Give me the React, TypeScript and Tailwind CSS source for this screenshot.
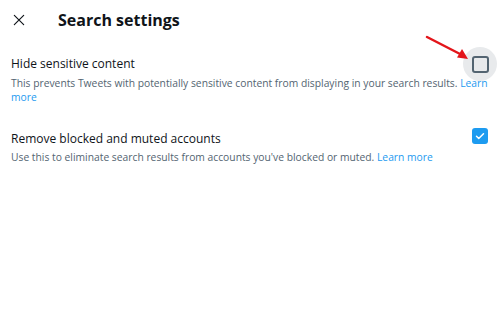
import React, { useState } from 'react';

const font = { fontFamily: '"Open Sans", sans-serif' };

function Checkbox({ checked, onChange, hover }: { checked: boolean; onChange: () => void; hover?: boolean }) {
  return (
    <button
      onClick={onChange}
      className={`flex h-[34px] w-[34px] items-center justify-center rounded-full ${hover ? 'bg-[#e8eaec]' : ''}`}
    >
      {checked ? (
        <span className="flex h-[16px] w-[16px] items-center justify-center rounded-[3px] bg-[#1d9bf0]">
          <svg viewBox="0 0 24 24" className="h-[12px] w-[12px]" fill="none" stroke="white" strokeWidth="3" strokeLinecap="round" strokeLinejoin="round">
            <path d="M5 12.5l4.5 4.5L19 7.5" />
          </svg>
        </span>
      ) : (
        <span className="h-[17px] w-[17px] rounded-[3px] border-2 border-[#536471]" />
      )}
    </button>
  );
}

export default function App() {
  const [hide, setHide] = useState(false);
  const [remove, setRemove] = useState(true);

  return (
    <div className="relative h-[318px] w-[500px] overflow-hidden bg-white text-[#0f1419]" style={font}>
      <div className="flex h-[40px] items-center">
        <button className="ml-[10px] flex h-[18px] w-[18px] items-center justify-center">
          <svg viewBox="0 0 24 24" className="h-[14px] w-[14px]" fill="none" stroke="#0f1419" strokeWidth="2" strokeLinecap="round">
            <path d="M4 4l16 16M20 4L4 20" />
          </svg>
        </button>
        <h1 className="ml-[30px] text-[16px] font-bold">Search settings</h1>
      </div>

      <div className="pl-[11px] pr-[10px] pt-[14px]">
        <div className="flex h-[20px] items-center justify-between">
          <div className="text-[12px]">Hide sensitive content</div>
          <div className="-mr-[7px]">
            <Checkbox checked={hide} onChange={() => setHide(!hide)} hover />
          </div>
        </div>
        <p className="mt-[2px] text-[10.3px] leading-[14px] text-[#536471]">
          This prevents Tweets with potentially sensitive content from displaying in your search results.{' '}
          <a className="text-[#1d9bf0]">Learn more</a>
        </p>
      </div>

      <div className="pl-[11px] pr-[10px] pt-[25px]">
        <div className="flex h-[20px] items-center justify-between">
          <div className="text-[12px]">Remove blocked and muted accounts</div>
          <div className="relative -top-[3px] -mr-[7px]">
            <Checkbox checked={remove} onChange={() => setRemove(!remove)} />
          </div>
        </div>
        <p className="mt-[1px] text-[10.3px] leading-[14px] text-[#536471]">
          Use this to eliminate search results from accounts you've blocked or muted.{' '}
          <a className="text-[#1d9bf0]">Learn more</a>
        </p>
      </div>

      {/* annotation arrow */}
      <svg className="pointer-events-none absolute left-[424px] top-[34px]" width="50" height="30" viewBox="0 0 50 30">
        <line x1="3" y1="3" x2="38" y2="21" stroke="#e3151a" strokeWidth="2.5" strokeLinecap="round" />
        <path d="M44 25L33 23.5L38 15z" fill="#e3151a" />
      </svg>
    </div>
  );
}
